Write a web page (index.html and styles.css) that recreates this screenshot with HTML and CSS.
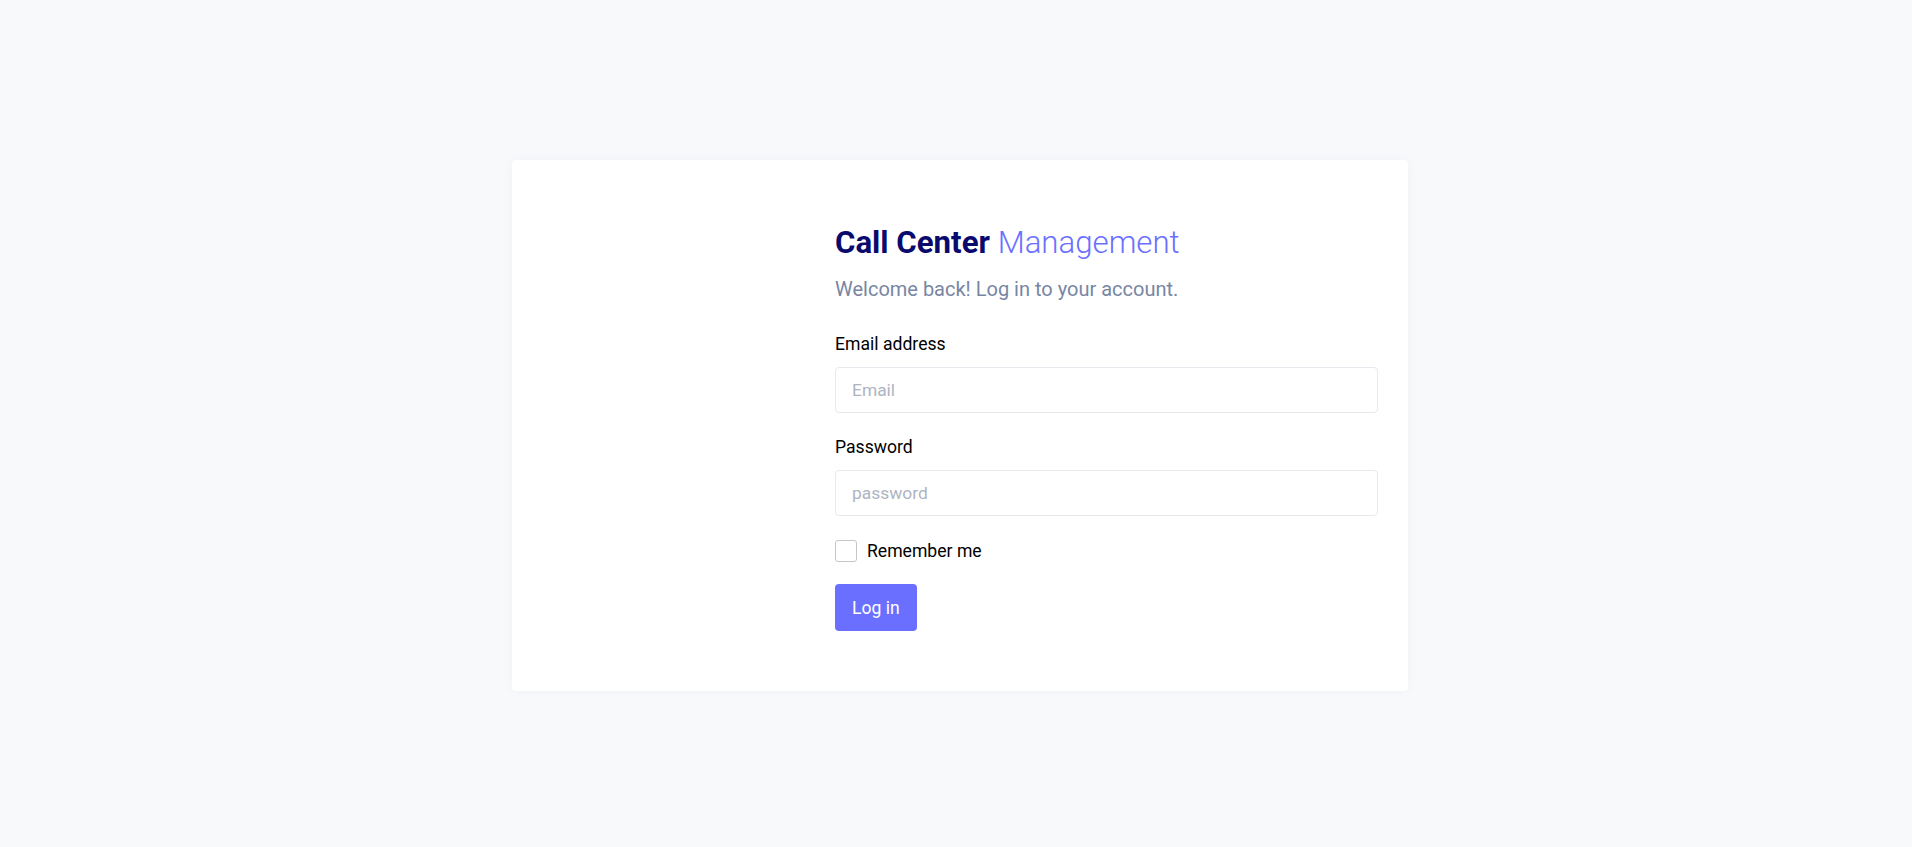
FILE: index.html
```html
<!DOCTYPE html>
<html lang="en">
<head>
<meta charset="utf-8">
<title>Call Center Management - Log in</title>
<link rel="stylesheet" href="styles.css">
</head>
<body>
<div class="page">
  <div class="card">
    <div class="card-side"></div>
    <form class="login">
      <h1 class="title"><span class="title-strong">Call Center</span> <span class="title-light">Management</span></h1>
      <p class="subtitle">Welcome back! Log in to your account.</p>
      <div class="field">
        <label class="label" for="email">Email address</label>
        <input class="input" id="email" type="email" placeholder="Email">
      </div>
      <div class="field">
        <label class="label" for="password">Password</label>
        <input class="input" id="password" type="password" placeholder="password">
      </div>
      <label class="remember">
        <span class="checkbox"></span>
        <span>Remember me</span>
      </label>
      <button class="btn" type="button">Log in</button>
    </form>
  </div>
</div>
</body>
</html>
```

FILE: styles.css
```css
* { box-sizing: border-box; }
html, body { margin: 0; padding: 0; }
body {
  background: #f8f9fb;
  font-family: Roboto, "Liberation Sans", sans-serif;
  color: #000;
}
.page {
  display: flex;
  justify-content: center;
  padding: 160px 0 0 8px;
  min-height: 100vh;
}
.card {
  width: 896px;
  height: 531px;
  background: #fff;
  border-radius: 4px;
  box-shadow: 0 0 10px rgba(150, 160, 180, 0.08);
  display: grid;
  grid-template-columns: 293px 1fr;
  padding: 65px 30px 60px 30px;
}
.login { display: flex; flex-direction: column; }
.title {
  margin: 0;
  font-size: 31.2px;
  line-height: 36px;
  font-weight: 400;
}
.title-strong { font-weight: 700; color: #0a0a6e; }
.title-light { font-weight: 300; color: #6b6fff; }
.subtitle {
  margin: 13px 0 0;
  font-size: 20px;
  line-height: 30px;
  color: #7886a4;
}
.field { display: flex; flex-direction: column; }
.field:first-of-type { margin-top: 27px; }
.label {
  font-size: 17.6px;
  line-height: 26px;
  margin-bottom: 10px;
}
.field + .field { margin-top: 21px; }
.input {
  height: 46px;
  border: 1px solid #e8e9ee;
  border-radius: 4px;
  padding: 0 16px;
  font-family: inherit;
  font-size: 17.4px;
  color: #333;
  outline: none;
}
.input::placeholder { color: #aeb4c1; }
.remember {
  display: flex;
  align-items: center;
  gap: 10px;
  margin-top: 22px;
  font-size: 17.6px;
  line-height: 26px;
}
.checkbox {
  width: 22px;
  height: 22px;
  border: 1px solid #c6c6c6;
  border-radius: 3px;
  background: #fff;
}
.btn {
  align-self: flex-start;
  margin-top: 20px;
  height: 47px;
  padding: 0 17px;
  border: none;
  border-radius: 4px;
  background: #6b6fff;
  color: #fff;
  font-family: inherit;
  font-size: 17.6px;
}
```
